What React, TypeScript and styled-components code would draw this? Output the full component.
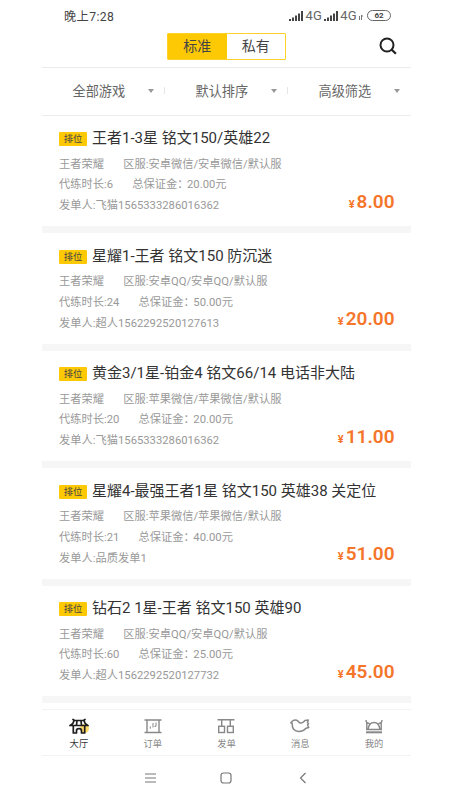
import React from 'react';
import styled, { createGlobalStyle } from 'styled-components';

const Global = createGlobalStyle`
  * { box-sizing: border-box; }
  body { margin: 0; background: #fff; }
`;

const Phone = styled.div`
  width: 369px;
  height: 800px;
  margin-left: 42px;
  display: flex;
  flex-direction: column;
  overflow: hidden;
  background: #fff;
  color: #444;
  font-family: Roboto, 'Noto Sans CJK SC', sans-serif;
  white-space: nowrap;
`;

const StatusBar = styled.div`
  height: 32px;
  padding: 0 20px 0 22px;
  display: flex;
  align-items: center;
  justify-content: space-between;
  font-size: 12.2px;
  letter-spacing: 0.4px;
  color: #444;
`;

const StatusIcons = styled.div`
  display: flex;
  align-items: center;
  gap: 2px;
  svg { display: block; }
`;

const Network = styled.span`
  font-size: 13px;
  line-height: 16px;
  letter-spacing: 0.3px;
  padding-top: 1px;
  color: #666;
`;

const Battery = styled.span`
  width: 24px;
  height: 11px;
  margin-left: 2px;
  border: 1px solid #666;
  border-radius: 6px;
  font-size: 8px;
  font-weight: 700;
  line-height: 9px;
  letter-spacing: 0;
  text-align: center;
`;

const Header = styled.header`
  height: 36px;
  padding: 0 14px 0 125px;
  display: flex;
  align-items: flex-start;
  justify-content: space-between;
  border-bottom: 1px solid #ebebeb;
  svg { margin-top: 5px; }
`;

const Segments = styled.div`
  width: 119px;
  height: 27px;
  margin-top: 1px;
  display: flex;
  border: 1px solid #fdd228;
  border-radius: 1px;
`;

const Segment = styled.div<{ $active?: boolean }>`
  flex: 1;
  font-size: 14px;
  line-height: 24px;
  text-align: center;
  background: ${p => (p.$active ? '#fdc904' : '#fff')};
`;

const Filters = styled.div`
  height: 48px;
  padding-bottom: 1px;
  display: grid;
  grid-template-columns: repeat(3, 123px);
  align-items: center;
  border-bottom: 1px solid #ececec;
`;

const Filter = styled.div`
  height: 20px;
  padding: 0 11.5px 0 30.5px;
  display: flex;
  align-items: center;
  justify-content: space-between;
  font-size: 13.2px;
  color: #666;
  &:not(:last-child) {
    background: linear-gradient(#e6e6e6, #e6e6e6) right center / 1px 7px no-repeat;
  }
`;

const Caret = styled.i`
  border: 3.5px solid transparent;
  border-top: 4px solid #999;
  border-bottom: 0;
`;

const List = styled.main`
  height: 594px;
  overflow: hidden;
`;

const Card = styled.article`
  height: 117.5px;
  padding: 12.5px 16.5px 0 17px;
  border-bottom: 7.5px solid #f6f6f6;
`;

const TitleRow = styled.div`
  height: 20px;
  display: flex;
  align-items: center;
  gap: 5px;
`;

const Tag = styled.span`
  width: 28px;
  height: 14px;
  margin-top: 2px;
  border-radius: 1px;
  background: #fdc904;
  font-size: 9.3px;
  line-height: 14px;
  text-align: center;
`;

const Title = styled.h2`
  margin: 0;
  font-size: 15px;
  line-height: 20px;
  font-weight: 400;
  color: #333;
`;

const Details = styled.div`
  margin-top: 6.3px;
  display: flex;
  align-items: flex-end;
  justify-content: space-between;
`;

const MetaLine = styled.div`
  height: 20.7px;
  display: flex;
  gap: 19.2px;
  font-size: 11.25px;
  line-height: 20.7px;
  color: #999;
`;

const Colon = styled.span`
  margin-right: -1.5px;
`;

const Price = styled.div`
  display: flex;
  align-items: baseline;
  gap: 2px;
  font-size: 19px;
  line-height: 24px;
  font-weight: 600;
  color: #f5762b;
`;

const Currency = styled.span`
  font-size: 11px;
  font-weight: 700;
`;

const TabBar = styled.nav`
  height: 47px;
  padding-top: 8px;
  display: grid;
  grid-template-columns: repeat(5, 1fr);
  border-top: 1px solid #f3f3f3;
  border-bottom: 1px solid #f3f3f3;
`;

const Tab = styled.div<{ $active?: boolean }>`
  display: flex;
  flex-direction: column;
  align-items: center;
  font-size: 9.3px;
  line-height: 14px;
  color: ${p => (p.$active ? '#333' : '#888')};
  svg { display: block; margin-bottom: 2px; }
`;

const SystemNav = styled.div`
  height: 44px;
  padding: 0 70px;
  display: grid;
  grid-template-columns: repeat(3, 1fr);
  place-items: center;
`;

const Signal = () => (
  <svg width="14" height="10" fill="#444">
    <rect x="0" y="8" width="2" height="2" />
    <rect x="3" y="6.5" width="2" height="3.5" />
    <rect x="6" y="4.5" width="2" height="5.5" />
    <rect x="9" y="2.5" width="2" height="7.5" />
    <rect x="12" y="0" width="2" height="10" />
  </svg>
);

const DataArrows = () => (
  <svg width="4" height="8" fill="none" stroke="#777" strokeWidth="1">
    <path d="M.5 4v4M2.500 3v5M2 4h2" />
  </svg>
);

const SearchIcon = () => (
  <svg width="18" height="18" fill="none" stroke="#222" strokeWidth="2">
    <circle cx="8" cy="8" r="6.5" />
    <path d="M12.5 12.5l4.400 4.300" strokeWidth="2.300" />
  </svg>
);

const HallIcon = () => (
  <svg width="20" height="17" fill="none" stroke="#1d1d1d" strokeWidth="1.700" strokeLinejoin="round" strokeLinecap="round">
    <circle cx="15.500" cy="10.500" r="4.500" fill="#ffdb68" stroke="none" />
    <path d="M4 1.500L5.500 2.500H14.500L16 1.500M5 2.500Q4.500 6 1 7.500M15 2.500Q15.500 6 19 7.500M1 7.500H19M8 3L7.500 7M12 3L12.500 7" />
    <path d="M4.300 8v7H7.500V12.700Q7.500 10.700 10 10.700T12.500 12.700V15H15.700V8" />
  </svg>
);

const OrderIcon = () => (
  <svg width="18" height="17" fill="none" stroke="#888" strokeWidth="1.400">
    <path d="M.5 2h17M.5 14.500h17M3 2v12.500M15 2v12.500" />
    <path d="M6.300 8.500v2.200M9 5v4.500M12 4.500v3.800H10.500" strokeWidth="1" />
  </svg>
);

const PublishIcon = () => (
  <svg width="18" height="17" fill="none" stroke="#888" strokeWidth="1.400">
    <path d="M.5 1.800h17M4.700 2v6M13.300 2v6" />
    <rect x="1.700" y="8.300" width="5.800" height="6.200" />
    <rect x="10.500" y="8.300" width="5.800" height="6.200" />
  </svg>
);

const MessageIcon = () => (
  <svg width="20" height="17" fill="none" stroke="#888" strokeWidth="1.500" strokeLinejoin="round" strokeLinecap="round">
    <path d="M.8 4.800L2.500 3Q5.500 1 8.300 3.300Q9.500 5.300 11.200 5.100Q13.400 4.500 15 2.500L18.300 2L17.500 4.500L18.500 5.800L17.500 7L18.800 9.500L16 10.300Q13.300 13.600 9 13.500Q1.700 13 2.200 5.300Z" />
  </svg>
);

const MineIcon = () => (
  <svg width="18" height="17" fill="none" stroke="#888" strokeWidth="1.400">
    <path d="M1 2Q1 5.500 4.500 5.500M17 2Q17 5.500 13.500 5.500M1.800 4.500V11M16.200 4.500V11M3.200 11Q4 4.500 9 4.500T14.800 11M1 11.500h16" />
    <path d="M1 14.300h16" strokeWidth="2" />
  </svg>
);

const orders = [
  { title: '王者1-3星 铭文150/英雄22', area: '安卓微信/安卓微信/默认服', hours: '6', deposit: '20.00', user: '飞猫1565333286016362', price: '8.00' },
  { title: '星耀1-王者 铭文150 防沉迷', area: '安卓QQ/安卓QQ/默认服', hours: '24', deposit: '50.00', user: '超人1562292520127613', price: '20.00' },
  { title: '黄金3/1星-铂金4 铭文66/14 电话非大陆', area: '苹果微信/苹果微信/默认服', hours: '20', deposit: '20.00', user: '飞猫1565333286016362', price: '11.00' },
  { title: '星耀4-最强王者1星 铭文150 英雄38 关定位', area: '苹果微信/苹果微信/默认服', hours: '21', deposit: '40.00', user: '品质发单1', price: '51.00' },
  { title: '钻石2 1星-王者 铭文150 英雄90', area: '安卓QQ/安卓QQ/默认服', hours: '60', deposit: '25.00', user: '超人1562292520127732', price: '45.00' },
];

const tabs = [
  { label: '大厅', Icon: HallIcon },
  { label: '订单', Icon: OrderIcon },
  { label: '发单', Icon: PublishIcon },
  { label: '消息', Icon: MessageIcon },
  { label: '我的', Icon: MineIcon },
];

export default function App() {
  return (
    <>
      <Global />
      <Phone>
        <StatusBar>
          <span>晚上7:28</span>
          <StatusIcons>
            <Signal />
            <Network>4G</Network>
            <Signal />
            <Network>4G</Network>
            <DataArrows />
            <Battery>62</Battery>
          </StatusIcons>
        </StatusBar>
        <Header>
          <Segments>
            <Segment $active>标准</Segment>
            <Segment>私有</Segment>
          </Segments>
          <SearchIcon />
        </Header>
        <Filters>
          {['全部游戏', '默认排序', '高级筛选'].map(name => (
            <Filter key={name}>{name}<Caret /></Filter>
          ))}
        </Filters>
        <List>
          {orders.map(o => (
            <Card key={o.title}>
              <TitleRow>
                <Tag>排位</Tag>
                <Title>{o.title}</Title>
              </TitleRow>
              <Details>
                <div>
                  <MetaLine><span>王者荣耀</span><span>区服:{o.area}</span></MetaLine>
                  <MetaLine><span>代练时长:{o.hours}</span><span>总保证金<Colon>：</Colon>{o.deposit}元</span></MetaLine>
                  <MetaLine><span>发单人:{o.user}</span></MetaLine>
                </div>
                <Price><Currency>¥</Currency>{o.price}</Price>
              </Details>
            </Card>
          ))}
        </List>
        <TabBar>
          {tabs.map(({ label, Icon }, i) => (
            <Tab key={label} $active={i === 0}><Icon />{label}</Tab>
          ))}
        </TabBar>
        <SystemNav>
          <svg width="11" height="10" stroke="#777"><path d="M0 1h11M0 5h11M0 9h11" /></svg>
          <svg width="12" height="12" fill="none" stroke="#777" strokeWidth="1.200"><rect x="1" y="1" width="10" height="10" rx="2.500" /></svg>
          <svg width="8" height="12" fill="none" stroke="#777" strokeWidth="1.200"><path d="M6.500 1L1.500 6l5 5" /></svg>
        </SystemNav>
      </Phone>
    </>
  );
}
